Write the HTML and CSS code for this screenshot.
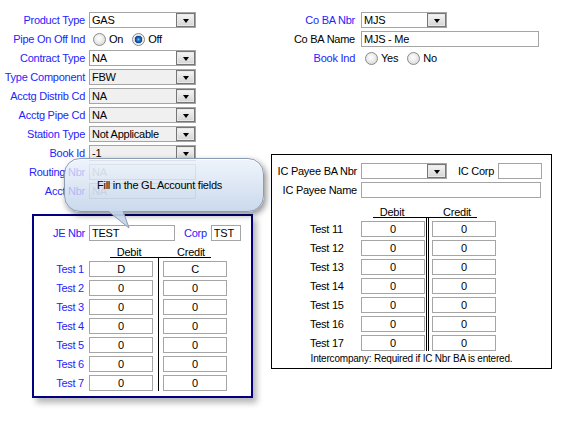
FILE: index.html
```html
<!DOCTYPE html>
<html lang="en">
<head>
    <meta charset="UTF-8">
    <meta name="viewport" content="width=device-width, initial-scale=1.0">
    <title>GL Account Entry</title>
    <link rel="stylesheet" href="styles.css">
</head>
<body>
<div class="page">
    <div class="col-left">
        <div class="form form-left">
            <label class="lbl">Product Type</label>
            <div class="select"><span class="val">GAS</span><span class="btn"></span></div>

            <label class="lbl">Pipe On Off Ind</label>
            <div class="radios">
                <label class="radio"><input type="radio" name="pipe">On</label>
                <label class="radio"><input type="radio" name="pipe" checked>Off</label>
            </div>

            <label class="lbl">Contract Type</label>
            <div class="select"><span class="val">NA</span><span class="btn"></span></div>

            <label class="lbl">Type Component</label>
            <div class="select off"><span class="val">FBW</span><span class="btn"></span></div>

            <label class="lbl">Acctg Distrib Cd</label>
            <div class="select off"><span class="val">NA</span><span class="btn"></span></div>

            <label class="lbl">Acctg Pipe Cd</label>
            <div class="select off"><span class="val">NA</span><span class="btn"></span></div>

            <label class="lbl">Station Type</label>
            <div class="select off"><span class="val">Not Applicable</span><span class="btn"></span></div>

            <label class="lbl">Book Id</label>
            <div class="select off"><span class="val">-1</span><span class="btn"></span></div>

            <label class="lbl">Routing Nbr</label>
            <input class="txt dis" value="NA" disabled>

            <label class="lbl">Acct Nbr</label>
            <input class="txt dis" value="NA" disabled>
        </div>

        <div class="gl-box">
            <div class="je-row">
                <label class="lbl je-lbl">JE Nbr</label>
                <input class="txt je" value="TEST">
                <label class="lbl corp-lbl">Corp</label>
                <input class="txt corp" value="TST">
            </div>
            <div class="cols-head gl-head"><span class="h-debit">Debit</span><span class="h-credit">Credit</span></div>
            <div class="ledger gl-ledger">
                <span class="divider"></span>
                <label>Test 1</label><input class="txt" value="D"><input class="txt" value="C">
                <label>Test 2</label><input class="txt" value="0"><input class="txt" value="0">
                <label>Test 3</label><input class="txt" value="0"><input class="txt" value="0">
                <label>Test 4</label><input class="txt" value="0"><input class="txt" value="0">
                <label>Test 5</label><input class="txt" value="0"><input class="txt" value="0">
                <label>Test 6</label><input class="txt" value="0"><input class="txt" value="0">
                <label>Test 7</label><input class="txt" value="0"><input class="txt" value="0">
            </div>
        </div>
    </div>

    <div class="col-right">
        <div class="form form-right">
            <label class="lbl">Co BA Nbr</label>
            <div class="select co-ba"><span class="val">MJS</span><span class="btn"></span></div>

            <label class="lbl black">Co BA Name</label>
            <input class="txt co-name" value="MJS - Me">

            <label class="lbl">Book Ind</label>
            <div class="radios">
                <label class="radio"><input type="radio" name="book">Yes</label>
                <label class="radio"><input type="radio" name="book">No</label>
            </div>
        </div>

        <div class="ic-box">
            <div class="ic-row">
                <label class="ic-lbl">IC Payee BA Nbr</label>
                <div class="select ic-ba"><span class="val"></span><span class="btn"></span></div>
                <label class="ic-corp-lbl">IC Corp</label>
                <input class="txt ic-corp" value="">
            </div>
            <div class="ic-row">
                <label class="ic-lbl">IC Payee Name</label>
                <input class="txt ic-name" value="">
            </div>
            <div class="cols-head ic-head"><span class="h-debit">Debit</span><span class="h-credit">Credit</span></div>
            <div class="ledger ic-ledger">
                <span class="divider"></span>
                <label>Test 11</label><input class="txt" value="0"><input class="txt" value="0">
                <label>Test 12</label><input class="txt" value="0"><input class="txt" value="0">
                <label>Test 13</label><input class="txt" value="0"><input class="txt" value="0">
                <label>Test 14</label><input class="txt" value="0"><input class="txt" value="0">
                <label>Test 15</label><input class="txt" value="0"><input class="txt" value="0">
                <label>Test 16</label><input class="txt" value="0"><input class="txt" value="0">
                <label>Test 17</label><input class="txt" value="0"><input class="txt" value="0">
            </div>
            <div class="note">Intercompany: Required if IC Nbr BA is entered.</div>
        </div>
    </div>

    <!-- balloon tip over the GL fields -->
    <div class="tip">
        Fill in the GL Account fields
        <svg class="tip-tail" width="24" height="19" viewBox="0 0 24 19">
            <polygon points="1,0 16,0 22,17" fill="rgba(196,212,234,0.92)"/>
            <polyline points="1,0 22,17 16,0" fill="none" stroke="#8c9cb4" stroke-width="1"/>
        </svg>
    </div>
</div>
</body>
</html>
```

FILE: styles.css
```css
body {
    margin: 0;
    font-family: "Liberation Sans", Arial, sans-serif;
    font-size: 11px;
    letter-spacing: -0.25px;
    color: #000;
    background: #fff;
}
.page {
    position: relative;
    display: flex;
    width: 561px;
    height: 422px;
    padding-top: 12px;
    box-sizing: border-box;
    overflow: hidden;
}
.col-left {
    width: 271px;
    flex: none;
}
.col-right {
    width: 281px;
    flex: none;
}
.form {
    display: grid;
    grid-auto-rows: 16px;
    row-gap: 3px;
    align-items: center;
}
.form-left {
    grid-template-columns: 85px 107px;
    column-gap: 4px;
}
.form-right {
    grid-template-columns: 84px auto;
    column-gap: 6px;
    justify-items: start;
}
.lbl {
    text-align: right;
    color: #2424ff;
    line-height: 16px;
    white-space: nowrap;
    justify-self: end;
}
.lbl.black {
    color: #000;
}
.txt {
    box-sizing: border-box;
    height: 16px;
    margin: 0;
    padding: 0 2px;
    border: 1px solid #a5a5a5;
    background: #fff;
    color: #000;
    font: inherit;
    letter-spacing: inherit;
    outline: none;
}
.txt.dis {
    color: #a0a0a0;
    background: #fafafa;
    border-color: #b4b4b4;
}
.select {
    box-sizing: border-box;
    height: 16px;
    display: flex;
    border: 1px solid #a5a5a5;
    background: #fff;
}
.select.off {
    background: #f0f0f0;
}
.select .val {
    flex: 1;
    padding-left: 2px;
    line-height: 14px;
    white-space: nowrap;
    overflow: hidden;
}
.select .btn {
    box-sizing: border-box;
    width: 19px;
    height: 14px;
    border: 1px solid #767676;
    background: linear-gradient(#f6f6f6, #d4d4d4);
    box-shadow: inset 0 0 0 1px #e9e9e9;
    display: flex;
    justify-content: center;
    align-items: flex-end;
    padding-bottom: 3px;
}
.select .btn::after {
    content: "";
    border-left: 3.5px solid transparent;
    border-right: 3.5px solid transparent;
    border-top: 4px solid #000;
}
.radios {
    display: flex;
    align-items: center;
    gap: 9px;
    padding-left: 4px;
}
.radio {
    display: flex;
    align-items: center;
    gap: 3px;
}
.radio input {
    -webkit-appearance: none;
    appearance: none;
    box-sizing: border-box;
    width: 13px;
    height: 13px;
    margin: 0;
    border: 1px solid #8a8a8a;
    border-radius: 50%;
    background: radial-gradient(circle at 45% 40%, #fff 0, #f0f0f0 35%, #cfcfcf 100%);
}
.radio input:checked {
    background: radial-gradient(circle, #7cc8ff 0, #2378d6 1.5px, #0c3d82 3.5px, #d8d8d8 4px, #f2f2f2 5px, #cfcfcf 100%);
}

/* GL account box */
.gl-box {
    box-sizing: border-box;
    width: 221px;
    height: 184px;
    margin: 15px 0 0 32px;
    padding-top: 9px;
    border: 2px solid #000080;
    background: #fff;
    box-shadow: 4px 5px 6px rgba(0, 0, 0, 0.28);
}
.je-row {
    display: flex;
    align-items: center;
    height: 16px;
}
.je-lbl {
    width: 51px;
}
.je {
    width: 86px;
    margin-left: 4px;
}
.corp-lbl {
    margin-left: 9px;
}
.corp {
    width: 30px;
    margin-left: 4px;
}
.cols-head {
    display: flex;
    border-bottom: 1px solid #000;
    line-height: 10px;
}
.cols-head span {
    text-align: center;
}
.h-debit {
    width: 38px;
}
.h-credit {
    width: 40px;
}
.gl-head {
    width: 101px;
    margin-left: 76px;
    padding-top: 6px;
    gap: 23px;
}
.ledger {
    display: grid;
    grid-template-rows: repeat(7, 16px);
    row-gap: 3px;
    padding-top: 3px;
    align-items: center;
}
.ledger label {
    line-height: 16px;
    white-space: nowrap;
}
.ledger .txt {
    text-align: center;
    width: 100%;
}
.ledger .divider {
    grid-column: 3;
    grid-row: 1 / span 7;
    align-self: stretch;
    margin-top: -3px;
}
.gl-ledger {
    grid-template-columns: 55px 64px 10px 64px;
}
.gl-ledger label {
    text-align: right;
    padding-right: 5px;
    color: #2424ff;
}
.gl-ledger .divider {
    justify-self: center;
    width: 1px;
    background: #000;
}

/* intercompany box */
.ic-box {
    box-sizing: border-box;
    width: 281px;
    height: 215px;
    margin-top: 88px;
    padding-top: 8px;
    border: 1px solid #000;
    background: #fff;
}
.ic-row {
    display: flex;
    align-items: center;
    height: 16px;
}
.ic-row + .ic-row {
    margin-top: 3px;
}
.ic-lbl {
    width: 85px;
    text-align: right;
    white-space: nowrap;
}
.ic-ba {
    width: 86px;
    margin-left: 4px;
}
.ic-corp-lbl {
    margin-left: 11px;
    white-space: nowrap;
}
.ic-corp {
    width: 44px;
    margin-left: 4px;
}
.ic-name {
    width: 180px;
    margin-left: 4px;
}
.ic-head {
    width: 104px;
    margin-left: 101px;
    padding-top: 9px;
    gap: 26px;
}
.ic-ledger {
    grid-template-columns: 89px 64px 7px 64px;
}
.ic-ledger label {
    padding-left: 38px;
}
.ic-ledger .divider {
    justify-self: start;
    margin-left: 1px;
    width: 0;
    border-left: 3px double #000;
}
.note {
    margin-top: 2px;
    font-size: 10px;
    letter-spacing: -0.2px;
    line-height: 11px;
    text-align: center;
}

.co-ba {
    width: 86px;
}
.co-name {
    width: 178px;
}

/* balloon tip */
.tip {
    position: absolute;
    left: 64px;
    top: 158px;
    width: 200px;
    height: 54px;
    box-sizing: border-box;
    padding-left: 32px;
    line-height: 52px;
    border: 1px solid #8c9cb4;
    border-radius: 16px;
    background: linear-gradient(rgba(234, 241, 250, 0.8), rgba(214, 226, 242, 0.78) 45%, rgba(194, 211, 234, 0.85));
    box-shadow: 2px 3px 6px rgba(0, 0, 0, 0.45), inset 0 1px 0 rgba(255, 255, 255, 0.9);
    white-space: nowrap;
}
.tip-tail {
    position: absolute;
    left: 42px;
    top: 52px;
    overflow: visible;
}
```
